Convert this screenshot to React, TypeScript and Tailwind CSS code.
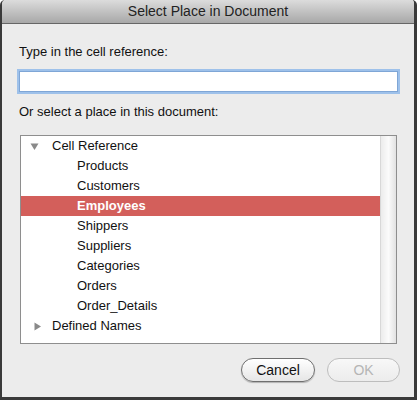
import React, { useState } from 'react';

const items = ['Products', 'Customers', 'Employees', 'Shippers', 'Suppliers', 'Categories', 'Orders', 'Order_Details'];

const Triangle: React.FC<{ open: boolean }> = ({ open }) => (
  <svg width="9" height="9" viewBox="0 0 9 9" className="shrink-0">
    {open ? <path d="M0.5 1.5 L8.5 1.5 L4.5 8 Z" fill="#8a8a8a" /> : <path d="M1.5 0.5 L8 4.5 L1.5 8.5 Z" fill="#8a8a8a" />}
  </svg>
);

const App: React.FC = () => {
  const [selected, setSelected] = useState('Employees');
  const [ref, setRef] = useState('');

  return (
    <div
      className="h-[400px] w-[417px] flex flex-col bg-[#ececec] border-l-2 border-r-[3px] border-b-[3px] border-[#3a3a3a] rounded-t-[5px] overflow-hidden text-[#111]"
      style={{ fontFamily: '"Liberation Sans", Arial, sans-serif' }}
    >
      <div className="h-6 shrink-0 flex items-center justify-center bg-gradient-to-b from-[#dcdcdc] to-[#a8a8a8] border-b border-[#666] text-[14px] text-[#222]">
        Select Place in Document
      </div>
      <div className="flex-1 flex flex-col items-start pl-[17px]">
        <div className="mt-[20px] text-[13px] leading-4">Type in the cell reference:</div>
        <input
          value={ref}
          onChange={(e) => setRef(e.target.value)}
          className="mt-[11px] h-[21px] w-[379px] bg-white border border-[#7fa6d6] ring-[2px] ring-[#9ec1ea] outline-none px-1 text-[13px]"
        />
        <div className="mt-[12px] text-[13px] leading-4">Or select a place in this document:</div>
        <div className="mt-[15px] ml-[1px] h-[209px] w-[377px] flex bg-white border border-[#8e8e8e]">
          <div className="flex-1 flex flex-col text-[13px]">
            <div className="h-5 flex items-center pl-[9px] gap-[13px]">
              <Triangle open />
              <span>Cell Reference</span>
            </div>
            {items.map((name) => (
              <div
                key={name}
                onClick={() => setSelected(name)}
                className={
                  name === selected
                    ? 'h-5 flex items-center pl-[56px] bg-[#d35f5b] text-white font-bold'
                    : 'h-5 flex items-center pl-[56px]'
                }
              >
                {name}
              </div>
            ))}
            <div className="h-5 flex items-center pl-[12px] gap-[10px]">
              <Triangle open={false} />
              <span>Defined Names</span>
            </div>
          </div>
          <div className="w-[16px] border-l border-[#d8d8d8] bg-gradient-to-r from-[#ececec] via-[#fbfbfb] to-[#e2e2e2]" />
        </div>
        <div className="mt-[14px] w-[381px] flex justify-end gap-[12px]">
          <button className="h-[24px] w-[74px] rounded-full border border-[#6f6f6f] bg-gradient-to-b from-white to-[#e6e6e6] text-[14px] text-[#111] shadow-[0_1px_1px_rgba(0,0,0,0.25)]">
            Cancel
          </button>
          <button className="h-[24px] w-[73px] rounded-full border border-[#bdbdbd] bg-gradient-to-b from-[#f8f8f8] to-[#ececec] text-[14px] text-[#b5b5b5]">
            OK
          </button>
        </div>
      </div>
    </div>
  );
};

export default App;
